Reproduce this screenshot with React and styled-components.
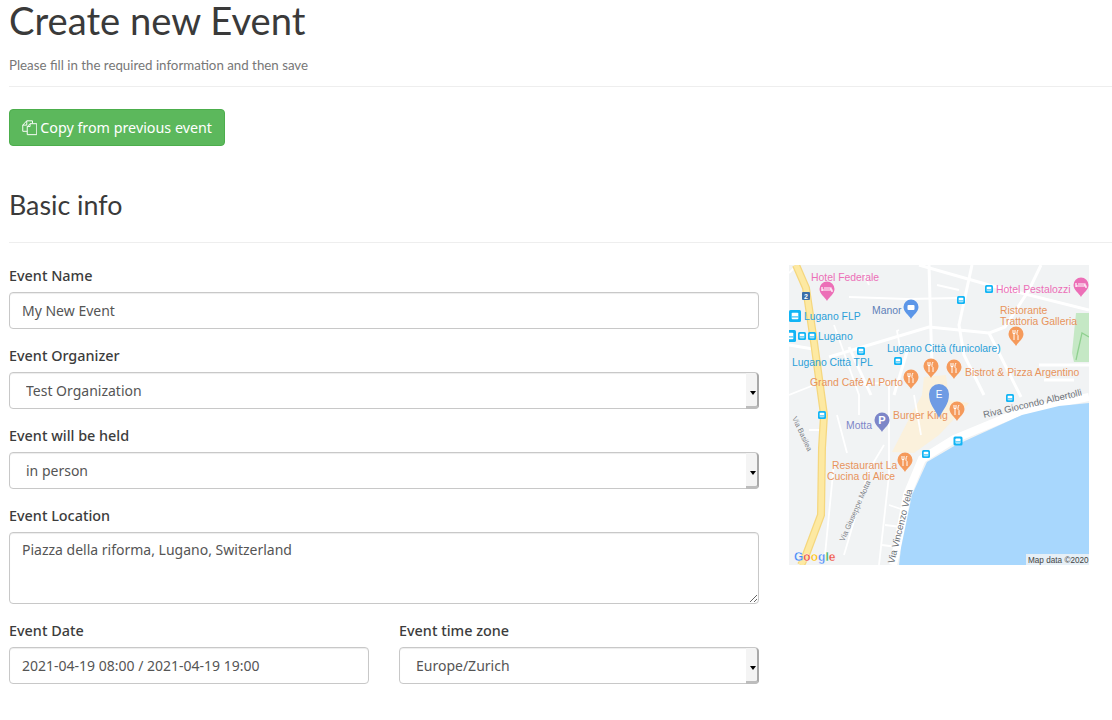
import React from "react";
import styled, { createGlobalStyle } from "styled-components";

const GlobalStyle = createGlobalStyle`
  html, body {
    margin: 0;
    padding: 0;
    background: #fff;
    overflow: hidden;
  }
  body {
    font-family: "Noto Sans", Lato, sans-serif;
    color: #333;
  }
`;

const Page = styled.div`
  width: 1112px;
  height: 720px;
  overflow: hidden;
  padding-left: 9px;
  box-sizing: border-box;
`;

const Title = styled.h1`
  margin: 0;
  font: 400 38.2px/41px Lato, sans-serif;
  color: #3a3a3a;
`;

const Subtitle = styled.p`
  margin: 15px 0 0;
  font: 400 13.3px/18px Lato, sans-serif;
  color: #777;
`;

const Rule = styled.hr`
  margin: ${(p) => p.$top}px 0 0;
  border: 0;
  border-top: 1px solid #eee;
`;

const CopyButton = styled.button`
  display: flex;
  align-items: center;
  gap: 3px;
  margin-top: 22px;
  height: 37px;
  width: 216px;
  padding: 0 12px;
  box-sizing: border-box;
  background: #5cb85c;
  border: 1px solid #4cae4c;
  border-radius: 4px;
  color: #fff;
  font: 400 14.3px "Noto Sans", sans-serif;
  white-space: nowrap;
`;

const SectionTitle = styled.h2`
  margin: 41px 0 0;
  font: 400 26.8px/36px Lato, sans-serif;
  color: #3a3a3a;
`;

const Columns = styled.div`
  display: flex;
  gap: 30px;
  margin-top: 22px;
`;

const FormColumn = styled.div`
  width: 750px;
  display: flex;
  flex-direction: column;
  gap: 16px;
`;

const Field = styled.div`
  display: flex;
  flex-direction: column;
  width: ${(p) => p.$width || "100%"};
`;

const Label = styled.label`
  font-size: 14.4px;
  line-height: 22px;
  font-weight: 500;
  color: #3c3c3c;
  margin-bottom: 5px;
`;

const controlStyles = `
  display: block;
  width: 100%;
  box-sizing: border-box;
  padding: 6px 12px;
  border: 1px solid #c8c8c8;
  border-radius: 4px;
  background-color: #fff;
  box-shadow: inset 0 1px 1px rgba(0, 0, 0, 0.075);
  font: 400 14px/22px "Noto Sans", sans-serif;
  color: #555;
`;

const Input = styled.input`
  ${controlStyles}
  height: 37px;
`;

const SelectWrap = styled.div`
  position: relative;

  &::before {
    content: "";
    position: absolute;
    top: 1px;
    right: 0;
    bottom: 0;
    width: 13px;
    box-sizing: border-box;
    background: #f4f4f4;
    border-right: 2px solid #a9a9a9;
    border-bottom: 3px solid #bdbdbd;
    border-radius: 0 4px 4px 0;
    pointer-events: none;
  }

  &::after {
    content: "";
    position: absolute;
    top: 19px;
    right: 3px;
    border-left: 3.5px solid transparent;
    border-right: 3.5px solid transparent;
    border-top: 4px solid #000;
    pointer-events: none;
  }
`;

const Select = styled.select`
  ${controlStyles}
  height: 37px;
  appearance: none;
  padding-left: 16px;
`;

const TextArea = styled.textarea`
  ${controlStyles}
  height: 72px;
  resize: vertical;
`;

const Row = styled.div`
  display: flex;
  gap: 30px;
`;

const MapBox = styled.svg`
  display: block;
  flex: none;
  width: 300px;
  height: 300px;
  font-family: "Liberation Sans", sans-serif;
`;

const CopyIcon = () => (
  <svg width="16" height="17" viewBox="0 0 16 17" fill="none" stroke="#fff" strokeWidth="1">
    <path d="M5 1.5H11V4M5 1.5L.8 6V12.5H5.5M5 1.5V6H.8" />
    <path d="M8.5 4.5H15.5V16H5.5V7.5ZM5.5 7.5H8.5V4.5" />
  </svg>
);

const Pin = ({ x, y, color, glyph = "fork" }) => (
  <g transform={`translate(${x} ${y})`}>
    <path d="M0 7C-2 3 -7.5 0 -7.5 -5A7.5 7.5 0 0 1 7.5 -5C7.5 0 2 3 0 7Z" fill={color} />
    {glyph === "fork" && (
      <path d="M-3 -9V-5.5H-1V-9M-2 -5.5V1M2 -9C.6 -7 .6 -4 2 -3.5V1" stroke="#fff" strokeWidth="1" fill="none" />
    )}
    {glyph === "bed" && <path d="M-5 -3V-7M-5 -4H5V-2M-3 -6H4V-4" stroke="#fff" strokeWidth="1.2" fill="none" />}
    {glyph === "bag" && <rect x="-3.5" y="-7" width="7" height="5" rx="1" fill="#fff" />}
    {glyph === "P" && (
      <text x="0" y="-1" textAnchor="middle" fontSize="11" fontWeight="700" fill="#fff">
        P
      </text>
    )}
  </g>
);

const Transit = ({ x, y, size = 8 }) => (
  <g transform={`translate(${x} ${y})`}>
    <rect x={-size / 2} y={-size / 2} width={size} height={size} rx="1.5" fill="#12b5f5" />
    <rect x={-size / 4 - 0.3} y={-size / 4 - 0.3} width={size / 2 + 0.6} height={size / 2 + 0.6} rx="0.8" fill="#fff" />
    <rect x={-size / 4 - 0.3} y={0.4} width={size / 2 + 0.6} height="1" fill="#12b5f5" />
  </g>
);

const MapLabel = ({ x, y, color, size = 10.4, rotate, children }) => (
  <text x={x} y={y} fill={color} fontSize={size} transform={rotate ? `rotate(${rotate} ${x} ${y})` : undefined}>
    {children}
  </text>
);

const roads = [
  "M130 0L200 20L300 45",
  "M183 0L170 60L175 90L195 130",
  "M252 0L240 25L216 62L200 68L232 132",
  "M40 92L140 62L200 68",
  "M140 0L142 70L143 100",
  "M105 130L120 80",
  "M0 80L30 85",
  "M60 82L82 130",
  "M250 100L300 100",
  "M255 115L285 115",
];

const thinRoads = [
  "M8 0L0 8",
  "M60 32L118 34L170 33",
  "M110 65L108 66L112 88",
  "M80 20L75 8",
  "M148 20L170 25",
  "M45 60L70 130L70 150",
  "M0 130L25 120M20 165L35 165",
  "M48 150L58 188",
  "M95 180L80 205L55 290",
  "M100 240L115 245M96 260L112 262M93 280L108 282",
  "M45 198L36 290",
  "M70 120L100 117L100 150L100 210L90 300",
  "M125 130L132 170",
];

const EventMap = () => (
  <MapBox viewBox="0 0 300 300">
    <rect width="300" height="300" fill="#f1f3f4" />
    <path d="M135 112L157 110L160 135L180 138L150 170L125 188L103 187L122 150L133 130Z" fill="#fbf1dc" />
    <path d="M287 48H300V97H285L283 88Z" fill="#c5e8c5" />
    <path d="M287 95L293 68L300 72M293 68L288 90" stroke="#8fd08f" strokeWidth="1.2" fill="none" />
    <g stroke="#fff" strokeWidth="1.8" fill="none">
      {thinRoads.map((d) => (
        <path key={d} d={d} />
      ))}
    </g>
    <g stroke="#fff" strokeWidth="3" fill="none">
      {roads.map((d) => (
        <path key={d} d={d} />
      ))}
    </g>
    <path d="M300 132L233 146L165 174L133 194L118 230L108 283L104 300" stroke="#fff" strokeWidth="8" fill="none" />
    <path d="M300 138L270 141L233 150L167 180L138 197L123 230L112 283L110 300H300Z" fill="#a8d7fd" />
    <path d="M7 0L17 23L25 77L35 150L33 183L32 250L17 290L12 300" stroke="#f5d77e" strokeWidth="8" fill="none" />
    <path d="M7 0L17 23L25 77L35 150L33 183L32 250L17 290L12 300" stroke="#fde9a2" strokeWidth="5.5" fill="none" />

    <MapLabel x="22" y="16" color="#ec6fb7">Hotel Federale</MapLabel>
    <MapLabel x="207" y="28" color="#ec6fb7">Hotel Pestalozzi</MapLabel>
    <MapLabel x="83" y="49" color="#5e7fb8">Manor</MapLabel>
    <MapLabel x="211" y="49" color="#e8935c">Ristorante</MapLabel>
    <MapLabel x="211" y="60" color="#e8935c">Trattoria Galleria</MapLabel>
    <MapLabel x="15" y="55" color="#2b9fd8">Lugano FLP</MapLabel>
    <MapLabel x="29" y="75" color="#2b9fd8">Lugano</MapLabel>
    <MapLabel x="98" y="87" color="#2b9fd8">Lugano Città (funicolare)</MapLabel>
    <MapLabel x="3" y="101" color="#2b9fd8">Lugano Città TPL</MapLabel>
    <MapLabel x="176" y="111" color="#e8935c">Bistrot &amp; Pizza Argentino</MapLabel>
    <MapLabel x="21" y="121" color="#e8935c">Grand Café Al Porto</MapLabel>
    <MapLabel x="104" y="154" color="#e8935c">Burger King</MapLabel>
    <MapLabel x="57" y="164" color="#7d86c8">Motta</MapLabel>
    <MapLabel x="43" y="204" color="#e8935c">Restaurant La</MapLabel>
    <MapLabel x="38" y="215" color="#e8935c">Cucina di Alice</MapLabel>
    <MapLabel x="195" y="153" color="#6d7278" size="9.5" rotate="-13">Riva Giocondo Albertolli</MapLabel>
    <MapLabel x="105" y="299" color="#6d7278" size="9.5" rotate="-76">Via Vincenzo Vela</MapLabel>
    <MapLabel x="55" y="277" color="#7d8288" size="7.5" rotate="-66">Via Giuseppe Motta</MapLabel>
    <MapLabel x="3" y="153" color="#7d8288" size="7.5" rotate="65">Via Basilea</MapLabel>

    <rect x="13" y="27" width="8" height="8" rx="1" fill="#3a6ea8" />
    <text x="17" y="34" textAnchor="middle" fontSize="7" fontWeight="700" fill="#fff">2</text>

    <Pin x={38} y={29} color="#ec6fb7" glyph="bed" />
    <Pin x={292} y={25} color="#ec6fb7" glyph="bed" />
    <Pin x={122} y={47} color="#5b96e8" glyph="bag" />
    <Pin x={227} y={74} color="#f59a5b" />
    <Pin x={142} y={106} color="#f59a5b" />
    <Pin x={165} y={107} color="#f59a5b" />
    <Pin x={122} y={117} color="#f59a5b" />
    <Pin x={168} y={149} color="#f59a5b" />
    <Pin x={93} y={160} color="#7d86c8" glyph="P" />
    <Pin x={116} y={200} color="#f59a5b" />

    <Transit x={6} y={51} size={12} />
    <Transit x={1} y={71} size={12} />
    <Transit x={13} y={71} />
    <Transit x={23} y={71} />
    <Transit x={72} y={86} />
    <Transit x={172} y={35} />
    <Transit x={200} y={24} />
    <Transit x={109} y={96} />
    <Transit x={221} y={133} />
    <Transit x={169} y={176} size={9} />
    <Transit x={137} y={189} />
    <Transit x={33} y={150} />

    <path d="M150 153C146 144 140 140 140 129A10 10 0 0 1 160 129C160 140 154 144 150 153Z" fill="#6f9be4" />
    <text x="150" y="133" textAnchor="middle" fontSize="10" fill="#fff">E</text>

    <text x="5" y="296" fontSize="12" fontWeight="700" stroke="#fff" strokeWidth="0.3">
      <tspan fill="#4285f4">G</tspan>
      <tspan fill="#ea4335">o</tspan>
      <tspan fill="#fbbc05">o</tspan>
      <tspan fill="#4285f4">g</tspan>
      <tspan fill="#34a853">l</tspan>
      <tspan fill="#ea4335">e</tspan>
    </text>
    <rect x="237" y="289" width="63" height="11" fill="#f1f3f4" opacity="0.85" />
    <text x="239" y="298" fontSize="8.2" fill="#444">Map data ©2020</text>
  </MapBox>
);

export default function App() {
  return (
    <Page>
      <GlobalStyle />
      <Title>Create new Event</Title>
      <Subtitle>Please fill in the required information and then save</Subtitle>
      <Rule $top={12} />
      <CopyButton>
        <CopyIcon />
        Copy from previous event
      </CopyButton>
      <SectionTitle>Basic info</SectionTitle>
      <Rule $top={19} />
      <Columns>
        <FormColumn>
          <Field>
            <Label>Event Name</Label>
            <Input defaultValue="My New Event" />
          </Field>
          <Field>
            <Label>Event Organizer</Label>
            <SelectWrap>
              <Select defaultValue="Test Organization">
                <option>Test Organization</option>
              </Select>
            </SelectWrap>
          </Field>
          <Field>
            <Label>Event will be held</Label>
            <SelectWrap>
              <Select defaultValue="in person">
                <option>in person</option>
              </Select>
            </SelectWrap>
          </Field>
          <Field>
            <Label>Event Location</Label>
            <TextArea defaultValue="Piazza della riforma, Lugano, Switzerland" />
          </Field>
          <Row>
            <Field $width="360px">
              <Label>Event Date</Label>
              <Input defaultValue="2021-04-19 08:00 / 2021-04-19 19:00" />
            </Field>
            <Field $width="360px">
              <Label>Event time zone</Label>
              <SelectWrap>
                <Select defaultValue="Europe/Zurich">
                  <option>Europe/Zurich</option>
                </Select>
              </SelectWrap>
            </Field>
          </Row>
        </FormColumn>
        <EventMap />
      </Columns>
    </Page>
  );
}
